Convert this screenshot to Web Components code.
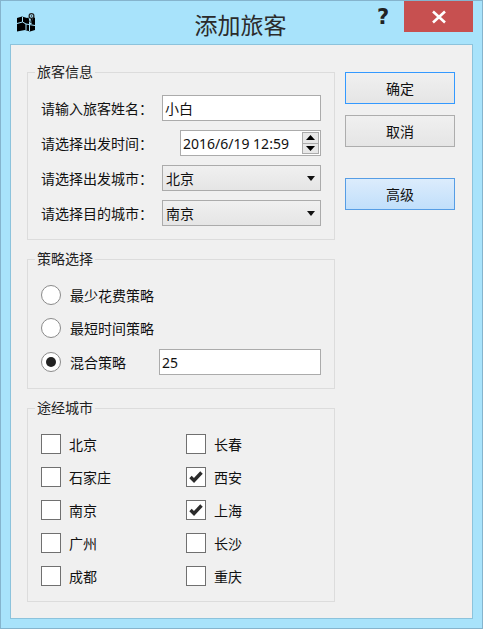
<!DOCTYPE html>
<html lang="zh">
<head>
<meta charset="utf-8">
<title>添加旅客</title>
<style>
    html, body {
        margin: 0;
        padding: 0;
        background: #a8e3fb;
    }

    body {
        font-family: "Noto Sans", "Noto Sans CJK SC", sans-serif;
        font-size: 14px;
        color: #111;
    }

    .row {
        display: grid;
        grid-template-columns: 121px 1fr;
        align-items: center;
    }

    .row-date {
        grid-template-columns: 139px 1fr;
    }

    .colon {
        font-family: "Noto Sans CJK TC", sans-serif;
    }

    .stack {
        display: flex;
        flex-direction: column;
        gap: 9px;
    }

    .strategies {
        display: flex;
        flex-direction: column;
        gap: 7px;
    }

    .strategies .last {
        margin-top: 1px;
        display: grid;
        grid-template-columns: 118px 1fr;
        align-items: center;
    }

    .cities {
        display: grid;
        grid-template-columns: 145px 1fr;
        row-gap: 13px;
    }

    .spacer {
        height: 9px;
    }
</style>
</head>
<body>

<dialog-window heading="添加旅客">
    <div slot="left">
        <form-group heading="旅客信息">
            <div class="stack">
                <div class="row"><span>请输入旅客姓名<span class="colon">：</span></span><text-field value="小白"></text-field></div>
                <div class="row row-date"><span>请选择出发时间<span class="colon">：</span></span><date-field value="2016/6/19 12:59"></date-field></div>
                <div class="row"><span>请选择出发城市<span class="colon">：</span></span><combo-field value="北京"></combo-field></div>
                <div class="row"><span>请选择目的城市<span class="colon">：</span></span><combo-field value="南京"></combo-field></div>
            </div>
        </form-group>
        <form-group heading="策略选择">
            <div class="strategies">
                <radio-option>最少花费策略</radio-option>
                <radio-option>最短时间策略</radio-option>
                <div class="last">
                    <radio-option checked>混合策略</radio-option>
                    <text-field value="25"></text-field>
                </div>
            </div>
        </form-group>
        <form-group heading="途经城市" top="16" bottom="15">
            <div class="cities">
                <check-option>北京</check-option><check-option>长春</check-option>
                <check-option>石家庄</check-option><check-option checked>西安</check-option>
                <check-option>南京</check-option><check-option checked>上海</check-option>
                <check-option>广州</check-option><check-option>长沙</check-option>
                <check-option>成都</check-option><check-option>重庆</check-option>
            </div>
        </form-group>
    </div>
    <push-button slot="right" variant="focus">确定</push-button>
    <push-button slot="right">取消</push-button>
    <div slot="right" class="spacer"></div>
    <push-button slot="right" variant="active">高级</push-button>
</dialog-window>

<script>
var templateWindow = document.createElement("template");
templateWindow.innerHTML = `
<style>
    :host {
        display: flex;
        flex-direction: column;
        box-sizing: border-box;
        width: 483px;
        height: 629px;
        border: 1px solid #85b4cd;
        background: #a8e3fb;
    }

    #titlebar {
        height: 43px;
        flex: none;
        display: grid;
        grid-template-columns: 1fr auto 1fr;
        align-items: center;
    }

    #icon {
        padding-left: 16px;
        height: 19px;
        margin-top: 0;
    }

    #heading {
        font-size: 23px;
        line-height: 32px;
        color: #2b2b2b;
        margin-top: 4px;
        padding-right: 2px;
    }

    #controls {
        display: flex;
        justify-content: flex-end;
        align-self: start;
        align-items: flex-start;
        padding-right: 9px;
    }

    #help {
        width: 27px;
        font: bold 21px/24px "DejaVu Sans", sans-serif;
        color: #222;
        margin-top: 4px;
    }

    #close {
        width: 69px;
        height: 31px;
        background: #c75050;
        display: flex;
        align-items: center;
        justify-content: center;
    }

    #body {
        flex: none;
        box-sizing: border-box;
        height: 575px;
        margin: 0 9px;
        border: 1px solid #8cc3dc;
        background: #f0f0f0;
        display: flex;
        gap: 10px;
        padding: 17px 17px 0 16px;
    }

    #left {
        width: 308px;
        display: flex;
        flex-direction: column;
    }

    #right {
        width: 110px;
        padding-top: 10px;
        display: flex;
        flex-direction: column;
        gap: 11px;
    }

    ::slotted([slot="left"]) {
        display: flex;
        flex-direction: column;
        gap: 9px;
    }
</style>

<div id="titlebar">
    <div id="icon">
        <svg width="19" height="19" viewBox="0 0 19 19">
            <path fill="#000" d="M0 5 L5 3.5 L10 5 L11.5 4.5 L13 11 L14.5 11 L15 8 L15.500 5 L18 4.500 L18 17 L13 18.500 L8 17 L0 18.500 Z"/>
            <path fill="none" stroke="#a8e3fb" stroke-width="1" d="M5.500 4 L5.500 9 L9 11 L9 17 M0 10.500 L5.500 9 M9 11 L18 12.500 M12.500 9 L12.500 18"/>
            <circle cx="14.500" cy="3" r="2.400" fill="#a8e3fb" stroke="#222" stroke-width="1.200"/>
            <circle cx="14.500" cy="3" r="0.800" fill="#222"/>
            <path stroke="#000" stroke-width="1.200" d="M14.500 5.500 L14 10"/>
        </svg>
    </div>
    <div id="heading"></div>
    <div id="controls">
        <div id="help">?</div>
        <div id="close">
            <svg width="16" height="14" viewBox="0 0 16 14">
                <path stroke="#fff" stroke-width="2.600" fill="none" d="M2 1.500 L14 12.500 M14 1.500 L2 12.500"/>
            </svg>
        </div>
    </div>
</div>
<div id="body">
    <div id="left"><slot name="left"></slot></div>
    <div id="right"><slot name="right"></slot></div>
</div>
`;

class DialogWindow extends HTMLElement {
    constructor() {
        super();

        this.shadow = this.attachShadow({ mode: "open" });
        this.shadow.appendChild(templateWindow.content.cloneNode(true));
        this.shadow.querySelector("#heading").textContent = this.getAttribute("heading");
    }
}

var templateGroup = document.createElement("template");
templateGroup.innerHTML = `
<style>
    :host {
        display: block;
    }

    fieldset {
        margin: 0;
        padding: 13px;
        border: 1px solid #dcdcdc;
    }

    legend {
        margin-left: -6px;
        padding: 0 2px;
        line-height: 20px;
        height: 20px;
        color: #222;
    }
</style>

<fieldset>
    <legend></legend>
    <slot></slot>
</fieldset>
`;

class FormGroup extends HTMLElement {
    constructor() {
        super();

        this.shadow = this.attachShadow({ mode: "open" });
        this.shadow.appendChild(templateGroup.content.cloneNode(true));
        this.shadow.querySelector("legend").textContent = this.getAttribute("heading");

        const fieldset = this.shadow.querySelector("fieldset");
        if (this.hasAttribute("top")) fieldset.style.paddingTop = this.getAttribute("top") + "px";
        if (this.hasAttribute("bottom")) fieldset.style.paddingBottom = this.getAttribute("bottom") + "px";
    }
}

var templateButton = document.createElement("template");
templateButton.innerHTML = `
<style>
    :host {
        display: flex;
        align-items: center;
        justify-content: center;
        box-sizing: border-box;
        height: 32px;
        border: 1px solid #adadad;
        background: linear-gradient(#f0f0f0, #e5e5e5);
        color: #111;
    }

    :host([variant="focus"]) {
        border-color: #3399ff;
    }

    :host([variant="active"]) {
        border-color: #569de5;
        background: linear-gradient(#dcecfc, #c1dffb);
    }
</style>
<slot></slot>
`;

class PushButton extends HTMLElement {
    constructor() {
        super();

        this.shadow = this.attachShadow({ mode: "open" });
        this.shadow.appendChild(templateButton.content.cloneNode(true));
    }
}

var templateText = document.createElement("template");
templateText.innerHTML = `
<style>
    :host {
        display: flex;
        align-items: center;
        box-sizing: border-box;
        height: 26px;
        padding-left: 2px;
        border: 1px solid #ababab;
        background: #fff;
        color: #111;
    }
</style>
<span id="value"></span>
`;

class TextField extends HTMLElement {
    constructor() {
        super();

        this.shadow = this.attachShadow({ mode: "open" });
        this.shadow.appendChild(templateText.content.cloneNode(true));
        this.shadow.querySelector("#value").textContent = this.getAttribute("value");
    }
}

var templateDate = document.createElement("template");
templateDate.innerHTML = `
<style>
    :host {
        display: flex;
        align-items: center;
        justify-content: space-between;
        box-sizing: border-box;
        height: 26px;
        padding: 0 1px 0 2px;
        border: 1px solid #ababab;
        background: #fff;
        color: #111;
    }

    #spin {
        display: flex;
        flex-direction: column;
        width: 17px;
        height: 22px;
        box-sizing: border-box;
        border: 1px solid #ababab;
        background: #e8e8e8;
    }

    .step {
        flex: 1;
        display: flex;
        align-items: center;
        justify-content: center;
    }

    .step + .step {
        border-top: 1px solid #ababab;
    }
</style>
<span id="value"></span>
<div id="spin">
    <div class="step"><svg width="9" height="5"><path d="M0 5 L4.500 0 L9 5 Z" fill="#000"/></svg></div>
    <div class="step"><svg width="9" height="5"><path d="M0 0 L9 0 L4.500 5 Z" fill="#000"/></svg></div>
</div>
`;

class DateField extends HTMLElement {
    constructor() {
        super();

        this.shadow = this.attachShadow({ mode: "open" });
        this.shadow.appendChild(templateDate.content.cloneNode(true));
        this.shadow.querySelector("#value").textContent = this.getAttribute("value");
    }
}

var templateCombo = document.createElement("template");
templateCombo.innerHTML = `
<style>
    :host {
        display: flex;
        align-items: center;
        justify-content: space-between;
        box-sizing: border-box;
        height: 26px;
        padding: 0 5px 0 3px;
        border: 1px solid #ababab;
        background: linear-gradient(#f0f0f0, #e5e5e5);
        color: #111;
    }
</style>
<span id="value"></span>
<svg width="8" height="5"><path d="M0 0 L8 0 L4 5 Z" fill="#111"/></svg>
`;

class ComboField extends HTMLElement {
    constructor() {
        super();

        this.shadow = this.attachShadow({ mode: "open" });
        this.shadow.appendChild(templateCombo.content.cloneNode(true));
        this.shadow.querySelector("#value").textContent = this.getAttribute("value");
    }
}

var templateRadio = document.createElement("template");
templateRadio.innerHTML = `
<style>
    :host {
        display: flex;
        align-items: center;
        gap: 9px;
        height: 26px;
    }

    #mark {
        flex: none;
        display: flex;
        align-items: center;
        justify-content: center;
        box-sizing: border-box;
        width: 20px;
        height: 20px;
        border: 1px solid #8a8a8a;
        border-radius: 50%;
        background: #fff;
    }

    :host([checked]) #mark::after {
        content: "";
        width: 10px;
        height: 10px;
        border-radius: 50%;
        background: #222;
    }
</style>
<div id="mark"></div>
<slot></slot>
`;

class RadioOption extends HTMLElement {
    constructor() {
        super();

        this.shadow = this.attachShadow({ mode: "open" });
        this.shadow.appendChild(templateRadio.content.cloneNode(true));
    }
}

var templateCheck = document.createElement("template");
templateCheck.innerHTML = `
<style>
    :host {
        display: flex;
        align-items: center;
        gap: 8px;
        height: 20px;
    }

    #mark {
        flex: none;
        display: flex;
        align-items: center;
        justify-content: center;
        box-sizing: border-box;
        width: 20px;
        height: 20px;
        border: 1px solid #707070;
        background: #fff;
    }

    svg {
        display: none;
    }

    :host([checked]) svg {
        display: block;
    }
</style>
<div id="mark">
    <svg width="14" height="12" viewBox="0 0 14 12">
        <path d="M1.500 6 L5 9.500 L12.500 1.500" fill="none" stroke="#2b2b2b" stroke-width="3.400"/>
    </svg>
</div>
<slot></slot>
`;

class CheckOption extends HTMLElement {
    constructor() {
        super();

        this.shadow = this.attachShadow({ mode: "open" });
        this.shadow.appendChild(templateCheck.content.cloneNode(true));
    }
}

window.customElements.define("dialog-window", DialogWindow);
window.customElements.define("form-group", FormGroup);
window.customElements.define("push-button", PushButton);
window.customElements.define("text-field", TextField);
window.customElements.define("date-field", DateField);
window.customElements.define("combo-field", ComboField);
window.customElements.define("radio-option", RadioOption);
window.customElements.define("check-option", CheckOption);
</script>
</body>
</html>
